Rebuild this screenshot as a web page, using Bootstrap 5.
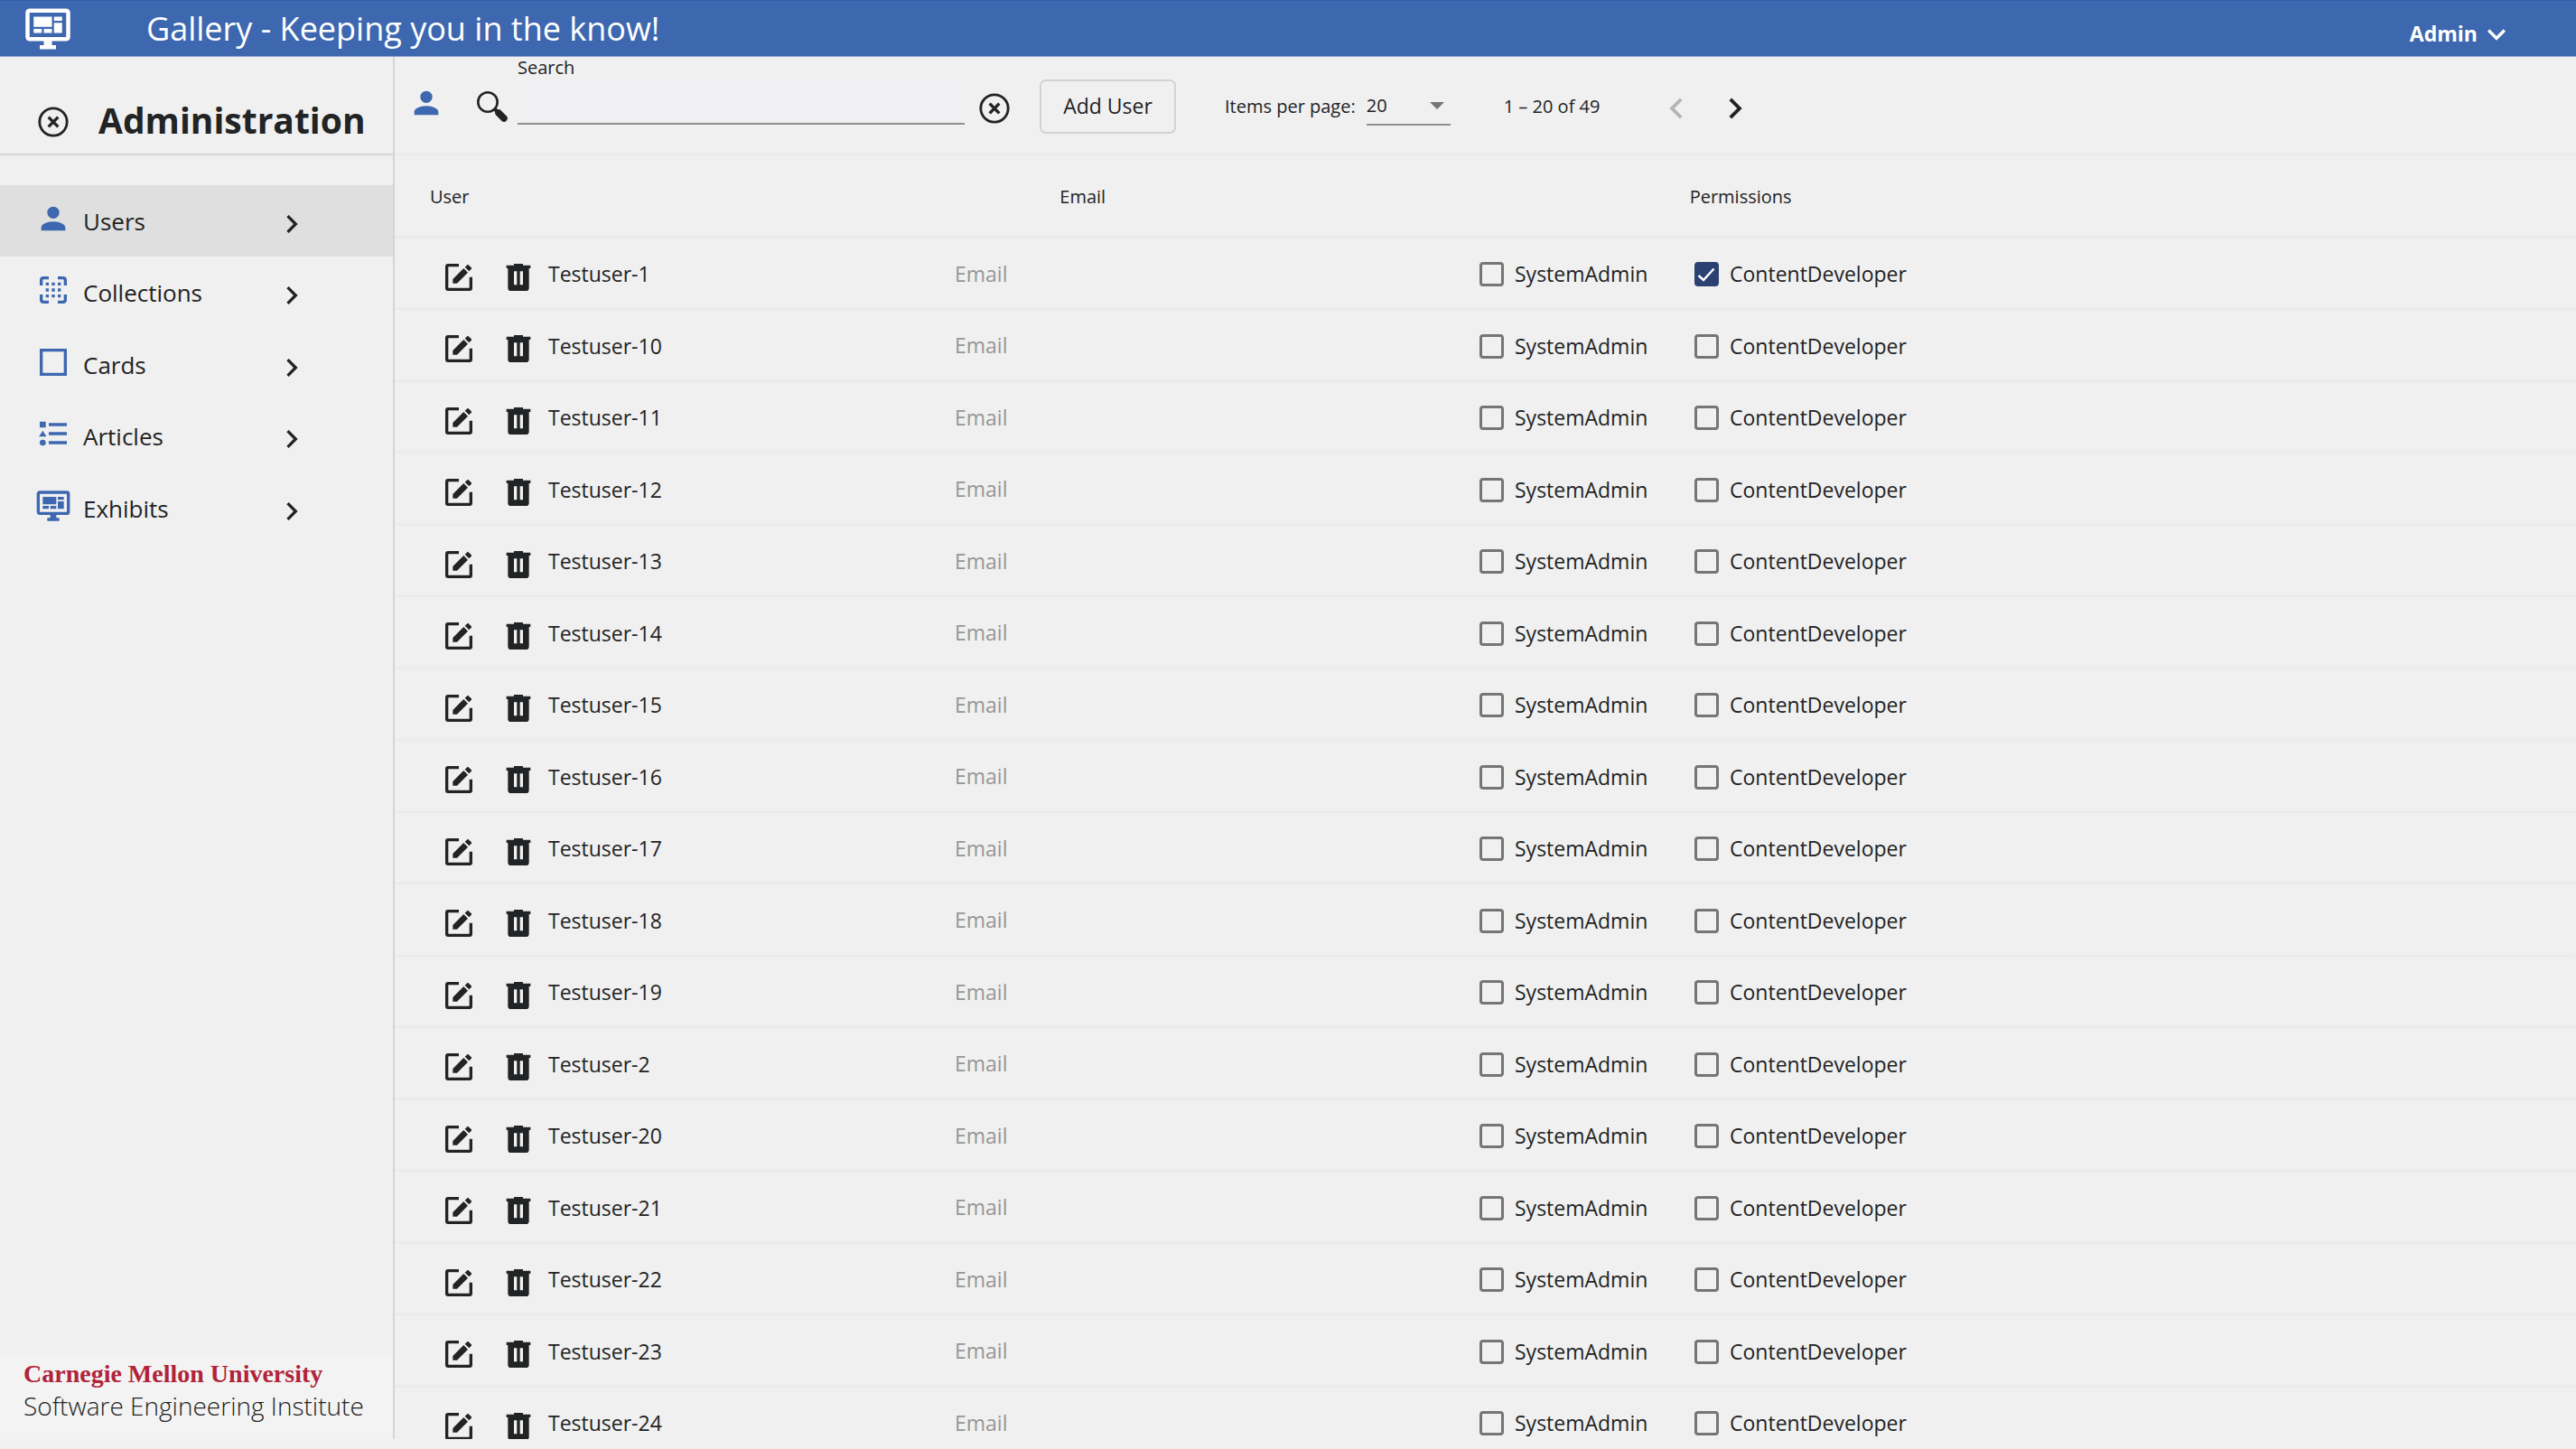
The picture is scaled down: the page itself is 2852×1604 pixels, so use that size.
<!DOCTYPE html>
<html lang="en">
<head>
<meta charset="utf-8">
<meta name="viewport" content="width=device-width, initial-scale=1">
<title>Gallery - Administration</title>
<link href="https://cdn.jsdelivr.net/npm/bootstrap@5.3.0/dist/css/bootstrap.min.css" rel="stylesheet">
<style>
  body { font-family: "Open Sans", "Noto Sans", sans-serif; background: #f0f0f0; color: #222324; height: 100vh; overflow: hidden; line-height: 1; }
  svg { display: block; flex: none; fill: currentColor; }
  .i40 { width: 40px; height: 40px; }
  .i46 { width: 46px; height: 46px; }
  .i54 { width: 54px; height: 54px; }
  .brand-blue { color: #3d67af; }
  .plain-btn { background: none; border: 0; padding: 0; color: inherit; }

  .topbar { background: #3d67af; color: #fff; height: 63px; border-top: 1px solid #355fa9; border-bottom: 1px solid #8fa6d0; padding: 0 68px 0 26px; flex: none; }
  .topbar h1 { font-size: 36px; line-height: 60px; font-weight: 400; margin: 0 0 0 82px; }
  .user-menu { font-size: 23px; font-weight: 700; padding-top: 12px; gap: 1px; }

  .shell { padding-bottom: 11px; min-height: 0; }
  .shell > main { min-height: 0; }
  .sidebar { width: 437px; flex: none; border-right: 2px solid #d5d5d5; }
  .side-head { height: 109px; border-bottom: 2px solid #d5d5d5; padding: 40px 0 0 39px; gap: 30px; }
  .side-head .plain-btn { padding-top: 12px; }
  .side-head h2 { font-size: 39px; line-height: 60px; font-weight: 700; margin: 0; }
  .side-nav { margin-top: 33px; }
  .side-nav a { height: 79px; padding: 0 92px 0 39px; font-size: 26px; color: inherit; text-decoration: none; }
  .side-nav a:nth-child(even) { height: 80px; }
  .side-nav a.active { background: #dfdfdf; }
  .side-nav .brand-blue { margin: 0 13px 6px 0; }
  .side-nav .chev { margin: 6px 0 0 auto; }
  .org-logo { background: #f3f3f3; height: 95px; padding: 8px 0 0 26px; white-space: nowrap; }
  .org-name { font: 700 28px/30px "Liberation Serif", serif; color: #b0233a; }
  .org-unit { font-size: 28px; line-height: 40px; font-weight: 300; color: #222; }

  .toolbar { height: 109px; flex: none; padding-left: 15px; }
  .toolbar .person { margin-bottom: 8px; }
  .search-icon { margin-left: 33px; }
  .search-field { width: 495px; height: 75px; border-bottom: 2px solid #8f8f8f; }
  .search-field label { font-size: 20px; line-height: 24px; }
  .search-field input { border: 0; background: #f0f0f2; width: 100%; height: 46px; outline: 0; font-size: 23px; }
  .clear-btn { margin: 4px 30px 0 13px; }
  .add-btn { width: 151px; height: 60px; border: 2px solid #d3d3d3; border-radius: 7px; background: none; font-size: 23px; color: inherit; }
  .pager { font-size: 20px; margin-left: 54px; }
  .page-size { width: 93px; border-bottom: 2px solid #8f8f8f; height: 42px; margin: 0 59px 0 12px; }
  .page-size select { appearance: none; border: 0; background: none; font-size: 20px; color: inherit; padding: 0; width: 100%; height: 34px; }
  .page-size svg { width: 16px; height: 8px; margin-left: -23px; color: #757575; pointer-events: none; }
  .page-btn { margin: 4px 19px 0 0; }
  .page-btn:disabled { color: #b5b5b5; }
  .page-range { margin-right: 62px; }

  .soft-line { box-shadow: inset 0 -4px 3px -2px #e8e8e8; }
  .list-head { height: 92px; flex: none; font-size: 20px; padding: 0 284px 0 39px; }
  .user-row { height: 79px; flex: none; font-size: 23px; padding-left: 51px; }
  .user-row:nth-child(even) { height: 80px; }
  .user-row .plain-btn { margin: 6px 26px 0 0; }
  .user-row .plain-btn + .plain-btn { margin-right: 13px; }
  .user-name { width: 450px; }
  .user-row input[type=text] { width: 581px; border: 0; padding: 0 0 2px; background: none; color: inherit; outline: 0; font-size: 23px; }
  .user-row input::placeholder { color: #969696; opacity: 1; }
  .perm input { appearance: none; width: 27px; height: 27px; border: 3px solid #757575; border-radius: 4px; margin: 0 12px 0 0; flex: none; }
  .perm input:checked { border-color: #2a4172; background: #2a4172 url("data:image/svg+xml,%3Csvg xmlns='http://www.w3.org/2000/svg' viewBox='0 0 21 21'%3E%3Cpath d='M1.500 12l5.500 5L18.500 4.500' fill='none' stroke='%23fff' stroke-width='2.400'/%3E%3C/svg%3E") center/100% no-repeat; }
  .perm-admin { width: 238px; }
</style>
<script src="https://cdn.jsdelivr.net/npm/bootstrap@5.3.0/dist/js/bootstrap.bundle.min.js"></script>
</head>
<body class="d-flex flex-column">
<svg class="d-none">
  <symbol id="monitor" viewBox="0 0 24 24"><path d="M21,16V4H3V16H21M21,2A2,2 0 0,1 23,4V16A2,2 0 0,1 21,18H14V20H16V22H8V20H10V18H3C1.890,18 1,17.100 1,16V4C1,2.890 1.890,2 3,2H21M5,6H14V11H5V6M15,6H19V8H15V6M19,9V14H15V9H19M5,12H9V14H5V12M10,12H14V14H10V12Z"/></symbol>
  <symbol id="person" viewBox="0 0 24 24"><path d="M12,4A4,4 0 0,1 12,12A4,4 0 0,1 12,4M12,14C16.420,14 20,15.790 20,18V20H4V18C4,15.790 7.580,14 12,14Z"/></symbol>
  <symbol id="chev-right" viewBox="0 0 24 24"><path d="M8.590,16.580L13.170,12L8.590,7.410L10,6L16,12L10,18Z"/></symbol>
  <symbol id="chev-left" viewBox="0 0 24 24"><path d="M15.410,16.580L10.830,12L15.410,7.410L14,6L8,12L14,18Z"/></symbol>
  <symbol id="chev-down" viewBox="0 0 24 24"><path d="M7.410,8.580L12,13.170L16.590,8.580L18,10L12,16L6,10Z"/></symbol>
  <symbol id="close" viewBox="0 0 24 24"><g fill="none" stroke="currentColor"><circle cx="12" cy="12" r="9.100" stroke-width="1.700"/><path d="M8.800 8.800l6.400 6.400M15.200 8.800l-6.400 6.400" stroke-width="2"/></g></symbol>
  <symbol id="search" viewBox="0 0 40 40"><g fill="none" stroke="currentColor"><circle cx="15" cy="15" r="10.700" stroke-width="2.600"/><path d="M22 22l5 5" stroke-width="4"/><path d="M27 27l6 6" stroke-width="7.500" stroke-linecap="round"/></g></symbol>
  <symbol id="edit" viewBox="0 0 24 24"><path d="M12 4H4.800Q4 4 4 4.800V19.200Q4 20 4.800 20H19.200Q20 20 20 19.200V11.800" fill="none" stroke="currentColor" stroke-width="2"/><path d="M8 16V13.200L15.200 6L18 8.800L10.800 16ZM16 5.200L17.600 3.700Q18 3.300 18.400 3.700L20.300 5.600Q20.700 6 20.300 6.400L18.800 8Z"/></symbol>
  <symbol id="trash" viewBox="0 0 24 24"><path fill-rule="evenodd" d="M4 4h5V3h6v1h5v2h-1v13a2 2 0 0 1-2 2H7a2 2 0 0 1-2-2V6H4ZM9 8v9h2V8ZM13 8v9h2V8Z"/></symbol>
</svg>

<header class="topbar d-flex align-items-center">
  <svg class="i54"><use href="#monitor"/></svg>
  <h1>Gallery - Keeping you in the know!</h1>
  <button class="plain-btn user-menu ms-auto d-flex align-items-center" type="button">Admin<svg class="i40"><use href="#chev-down"/></svg></button>
</header>

<div class="shell d-flex flex-grow-1">
  <aside class="sidebar d-flex flex-column">
    <div class="side-head d-flex align-items-start">
      <button class="plain-btn" type="button" aria-label="Close"><svg class="i40"><use href="#close"/></svg></button>
      <h2>Administration</h2>
    </div>
    <nav class="side-nav">
      <a href="#" class="active d-flex align-items-center"><svg class="i40 brand-blue"><use href="#person"/></svg>Users<svg class="i40 chev"><use href="#chev-right"/></svg></a>
      <a href="#" class="d-flex align-items-center"><svg class="i40 brand-blue" viewBox="0 0 24 24"><path d="M4 9V5.500Q4 4 5.500 4H9M15 4h3.500Q20 4 20 5.500V9M20 15v3.500Q20 20 18.500 20H15M9 20H5.500Q4 20 4 18.500V15" fill="none" stroke="currentColor" stroke-width="2"/><path d="M7 7h2v2H7zM11 7h2v2h-2zM15 7h2v2h-2zM7 11h2v2H7zM11 11h2v2h-2zM15 11h2v2h-2zM7 15h2v2H7zM11 15h2v2h-2zM15 15h2v2h-2z"/></svg>Collections<svg class="i40 chev"><use href="#chev-right"/></svg></a>
      <a href="#" class="d-flex align-items-center"><svg class="i40 brand-blue" viewBox="0 0 24 24"><path d="M4 4H20V20H4Z" fill="none" stroke="currentColor" stroke-width="2"/></svg>Cards<svg class="i40 chev"><use href="#chev-right"/></svg></a>
      <a href="#" class="d-flex align-items-center"><svg class="i40 brand-blue" viewBox="0 0 24 24"><path d="M3 4h4v4H3zM5 10l2.500 4h-5zM9 5h12v2H9zM9 11h12v2H9zM9 17h12v2H9z"/><circle cx="5" cy="18" r="2"/></svg>Articles<svg class="i40 chev"><use href="#chev-right"/></svg></a>
      <a href="#" class="d-flex align-items-center"><svg class="i40 brand-blue"><use href="#monitor"/></svg>Exhibits<svg class="i40 chev"><use href="#chev-right"/></svg></a>
    </nav>
    <div class="org-logo mt-auto">
      <div class="org-name">Carnegie Mellon University</div>
      <div class="org-unit">Software Engineering Institute</div>
    </div>
  </aside>

  <main class="d-flex flex-column flex-grow-1">
    <div class="toolbar soft-line d-flex align-items-center">
      <svg class="i40 brand-blue person"><use href="#person"/></svg>
      <label for="search" class="search-icon" aria-label="Search"><svg class="i40"><use href="#search"/></svg></label>
      <div class="search-field ms-2 d-flex flex-column align-self-start">
        <label for="search">Search</label>
        <input id="search" type="text">
      </div>
      <button class="plain-btn clear-btn" type="button" aria-label="Clear search"><svg class="i40"><use href="#close"/></svg></button>
      <button class="add-btn" type="button">Add User</button>
      <div class="pager d-flex align-items-center">
        <label for="size">Items per page:</label>
        <div class="page-size d-flex align-items-center"><select id="size"><option>20</option><option>50</option></select><svg viewBox="0 0 16 8"><path d="M0 0H16L8 8Z"/></svg></div>
        <span class="page-range">1 – 20 of 49</span>
        <button class="plain-btn page-btn" type="button" disabled aria-label="Previous page"><svg class="i46"><use href="#chev-left"/></svg></button>
        <button class="plain-btn page-btn" type="button" aria-label="Next page"><svg class="i46"><use href="#chev-right"/></svg></button>
      </div>
    </div>
    <div class="list-head soft-line d-flex align-items-center">
      <div class="col">User</div><div class="col">Email</div><div class="col">Permissions</div>
    </div>
    <div id="users" class="d-flex flex-column overflow-hidden flex-grow-1"></div>
  </main>
</div>
<script>
  const ids = [1, 10, 11, 12, 13, 14, 15, 16, 17, 18, 19, 2, 20, 21, 22, 23, 24];
  document.getElementById('users').innerHTML = ids.map(n => `
    <div class="user-row soft-line d-flex align-items-center">
      <button class="plain-btn" type="button" aria-label="Edit Testuser-${n}"><svg class="i40"><use href="#edit"/></svg></button>
      <button class="plain-btn" type="button" aria-label="Delete Testuser-${n}"><svg class="i40"><use href="#trash"/></svg></button>
      <span class="user-name">Testuser-${n}</span>
      <input type="text" placeholder="Email" aria-label="Email of Testuser-${n}">
      <label class="perm perm-admin d-flex align-items-center"><input type="checkbox">SystemAdmin</label>
      <label class="perm d-flex align-items-center"><input type="checkbox"${n === 1 ? ' checked' : ''}>ContentDeveloper</label>
    </div>`).join('');
</script>
</body>
</html>
